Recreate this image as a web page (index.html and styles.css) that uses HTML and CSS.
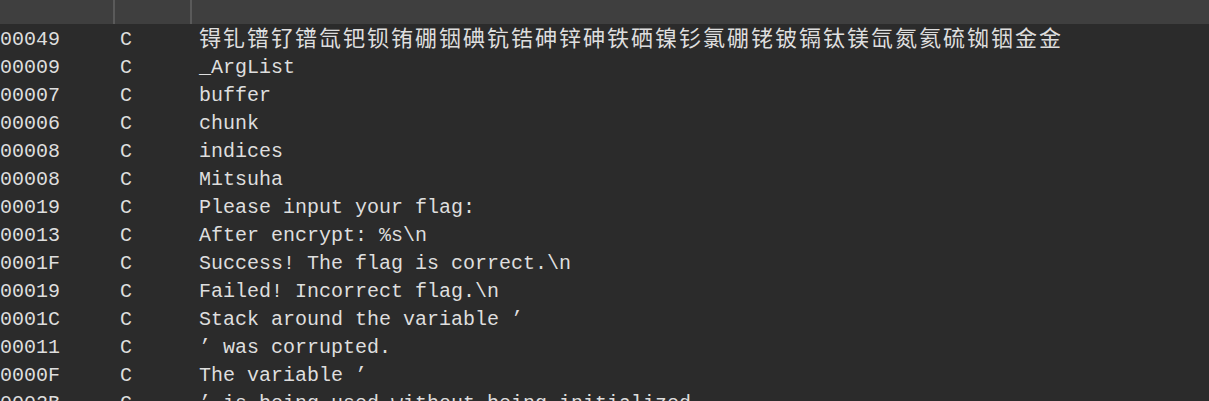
FILE: index.html
```html
<!DOCTYPE html>
<html>
<head>
<meta charset="utf-8">
<link rel="stylesheet" href="styles.css">
</head>
<body>
<div class="view">
  <div class="header">
    <div class="hcell"></div>
    <div class="hcell"></div>
    <div class="hcell last"></div>
  </div>
  <div class="rows">
    <div class="row"><span>00049</span><span>C</span><span class="cjk">锝钆镨钌镨氙钯钡铕硼铟碘钪锆砷锌砷铁硒镍钐氯硼铑铍镉钛镁氙氮氦硫铷铟金金</span></div>
    <div class="row"><span>00009</span><span>C</span><span>_ArgList</span></div>
    <div class="row"><span>00007</span><span>C</span><span>buffer</span></div>
    <div class="row"><span>00006</span><span>C</span><span>chunk</span></div>
    <div class="row"><span>00008</span><span>C</span><span>indices</span></div>
    <div class="row"><span>00008</span><span>C</span><span>Mitsuha</span></div>
    <div class="row"><span>00019</span><span>C</span><span>Please input your flag:</span></div>
    <div class="row"><span>00013</span><span>C</span><span>After encrypt: %s\n</span></div>
    <div class="row"><span>0001F</span><span>C</span><span>Success! The flag is correct.\n</span></div>
    <div class="row"><span>00019</span><span>C</span><span>Failed! Incorrect flag.\n</span></div>
    <div class="row"><span>0001C</span><span>C</span><span>Stack around the variable ’</span></div>
    <div class="row"><span>00011</span><span>C</span><span>’ was corrupted.</span></div>
    <div class="row"><span>0000F</span><span>C</span><span>The variable ’</span></div>
    <div class="row"><span>0002B</span><span>C</span><span>’ is being used without being initialized.</span></div>
  </div>
</div>
</body>
</html>
```
FILE: styles.css
```css
html, body {
  margin: 0;
  padding: 0;
  background: #2b2b2b;
  overflow: hidden;
}
.view {
  width: 1209px;
  height: 401px;
  overflow: hidden;
  background: #2b2b2b;
}
.header {
  display: grid;
  grid-template-columns: 115px 77px 1fr;
  height: 24px;
  background: #3f3f3f;
  margin-bottom: 1px;
}
.hcell {
  border-right: 2px solid #5a5a5a;
}
.hcell.last {
  border-right: none;
}
.rows {
  display: flex;
  flex-direction: column;
}
.row {
  display: grid;
  grid-template-columns: 120px 79px 1fr;
  height: 28px;
  line-height: 28px;
  font-family: "Liberation Mono", "Noto Sans CJK SC", monospace;
  font-size: 20px;
  color: #dedede;
  white-space: pre;
}
.row span {
  padding-top: 2px;
  line-height: 26px;
}
.row span.cjk {
  font-family: "Noto Sans CJK SC", sans-serif;
  font-size: 22px;
  letter-spacing: 2px;
  padding-top: 0;
  margin-top: -3px;
  line-height: 28px;
}
```
